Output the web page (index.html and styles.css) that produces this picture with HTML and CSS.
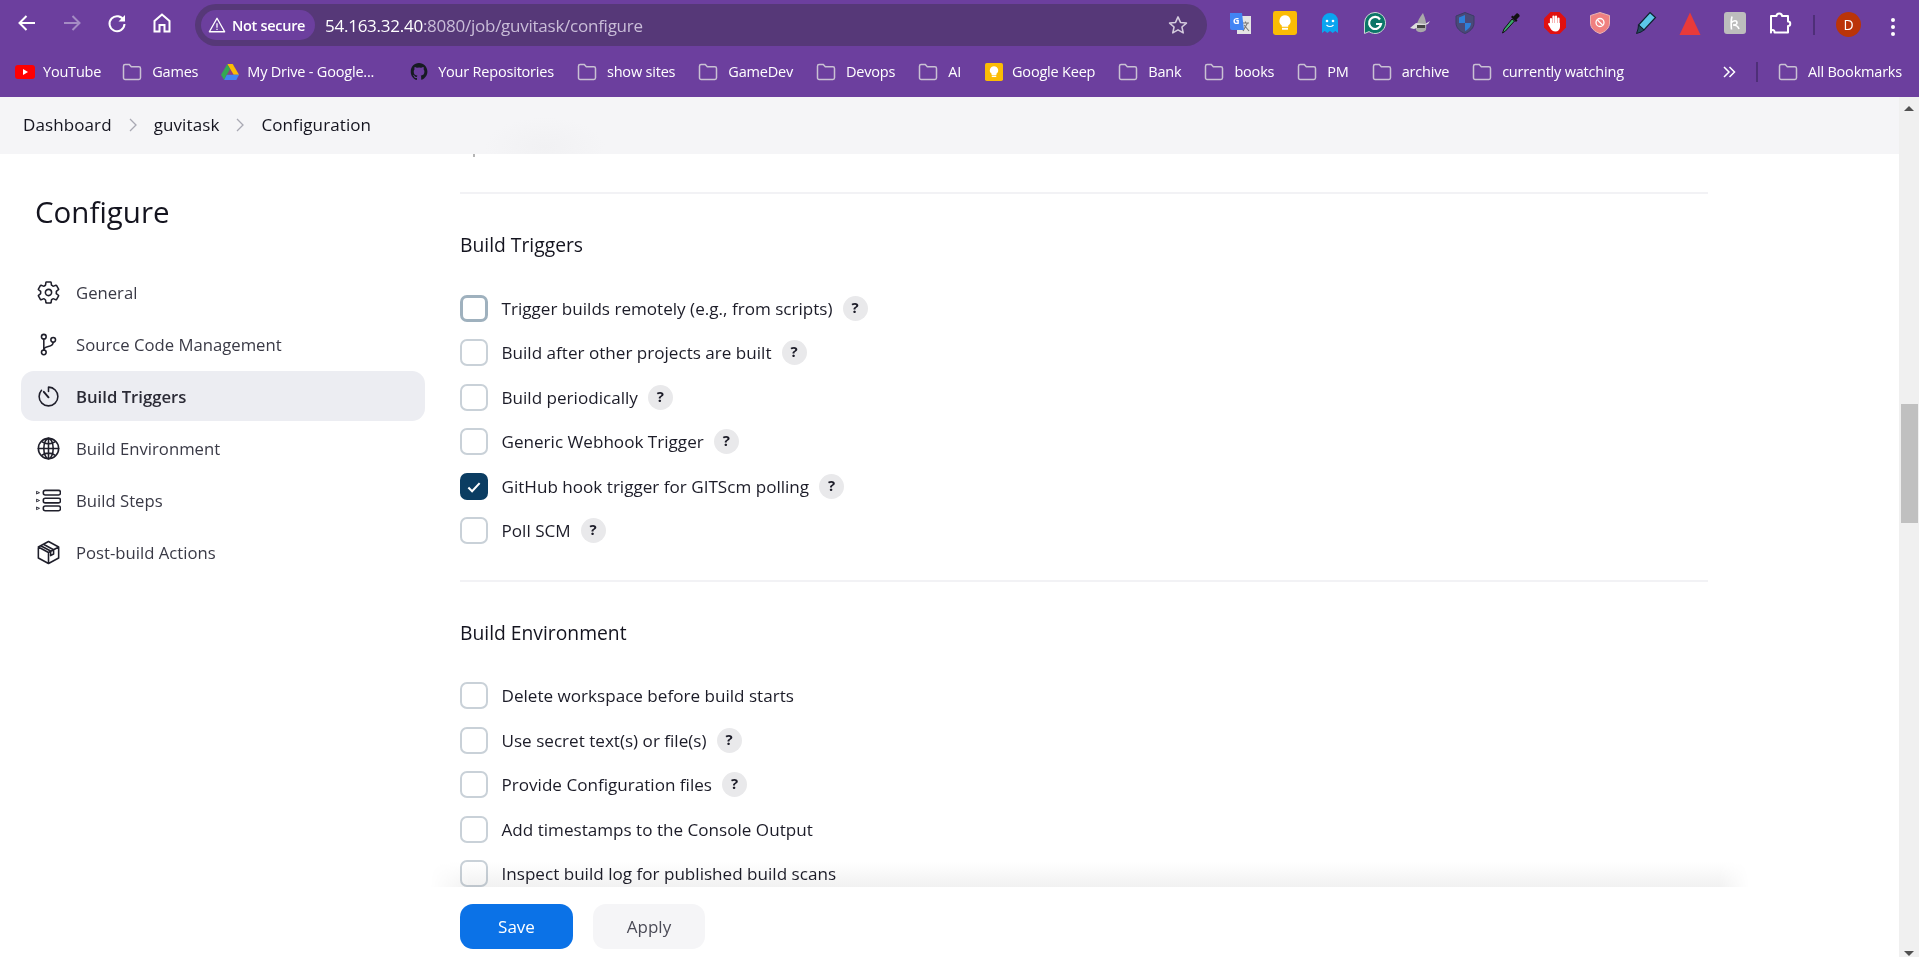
FILE: index.html
```html
<!DOCTYPE html>
<html lang="en">
<head>
    <meta charset="UTF-8">
    <meta name="viewport" content="width=device-width, initial-scale=1.0">
    <title>guvitask Config [Jenkins]</title>
    <link rel="stylesheet" href="styles.css">
</head>
<body>
    <svg class="defs" width="0" height="0">
        <symbol id="folder" viewBox="0 0 20 18">
            <path d="M1.5 3.2c0-.9.7-1.6 1.6-1.6h4.2l2 2.2h7.6c.9 0 1.6.7 1.6 1.6v9.4c0 .9-.7 1.6-1.6 1.6H3.1c-.9 0-1.6-.7-1.6-1.6z" fill="none" stroke="#c9c1d3" stroke-width="1.5"/>
        </symbol>
        <symbol id="keep" viewBox="0 0 20 20">
            <rect width="20" height="20" rx="2" fill="#fbbc04"/>
            <path d="M10 3.5a4.7 4.7 0 0 0-2.7 8.5v1.2h5.4V12A4.7 4.7 0 0 0 10 3.5z" fill="#fff"/>
            <rect x="7.5" y="14" width="5" height="1.6" fill="#fff"/>
        </symbol>
    </svg>

    <header class="chrome">
        <div class="toolbar">
            <div class="nav">
                <svg class="nav-icon" viewBox="0 0 24 24"><path d="M20 12H5M11.5 5L4.5 12l7 7" fill="none" stroke="#fff" stroke-width="2"/></svg>
                <svg class="nav-icon" viewBox="0 0 24 24"><path d="M4 12h15M12.5 5l7 7-7 7" fill="none" stroke="#a58cc4" stroke-width="2"/></svg>
                <svg class="nav-icon" viewBox="0 0 24 24"><path d="M18.800 9.500A7.500 7.500 0 1 0 19.500 13" fill="none" stroke="#fff" stroke-width="2"/><path d="M20 4v6.500h-6.500z" fill="#fff"/></svg>
                <svg class="nav-icon" viewBox="0 0 24 24"><path d="M12 3.500L4.500 10v10.500h5v-6.500h5v6.500h5V10z" fill="none" stroke="#fff" stroke-width="2"/></svg>
            </div>
            <div class="omnibox">
                <div class="not-secure">
                    <svg class="warn" viewBox="0 0 20 20"><path d="M10 2.500L1.500 17.500h17z" fill="none" stroke="#fff" stroke-width="1.500" stroke-linejoin="round"/><path d="M10 8v5M10 14.200v1.400" stroke="#fff" stroke-width="1.400"/></svg>
                    <span>Not secure</span>
                </div>
                <div class="url"><b>54.163.32.40</b>:8080/job/guvitask/configure</div>
                <svg class="star" viewBox="0 0 24 24"><path d="M12 3.200l2.700 6 6.500.7-4.900 4.300 1.400 6.400L12 17.300l-5.700 3.300 1.400-6.400-4.900-4.300 6.500-.7z" fill="none" stroke="#d4cbdd" stroke-width="1.700" stroke-linejoin="round"/></svg>
            </div>
            <div class="extensions">
                <svg class="ext" viewBox="0 0 24 24"><rect x="9" y="5" width="14" height="18" fill="#e4e4e4"/><path d="M14 12h7M17.500 10.500v1.500M15 20l4.500-8M16 14l5 6" stroke="#777" stroke-width="1.100" fill="none"/><path d="M2 2h12l2 17H4a2 2 0 0 1-2-2z" fill="#4285f4"/><text x="5" y="13" class="ext-g">G</text></svg>
                <svg class="ext" viewBox="0 0 20 20"><use href="#keep"/></svg>
                <svg class="ext" viewBox="0 0 24 24"><path d="M4 22V10a8 8 0 0 1 16 0v12l-2.700-2-2.600 2-2.700-2-2.600 2-2.700-2z" fill="#0aa5f0"/><circle cx="9" cy="10" r="1.300" fill="#fff"/><circle cx="15" cy="10" r="1.300" fill="#fff"/><path d="M8.500 14c2 2 5 2 7 0" fill="none" stroke="#fff" stroke-width="1.200"/></svg>
                <svg class="ext" viewBox="0 0 24 24"><path d="M12 1.500a10.500 10.500 0 1 1-6 19.100L1.500 22.500V12A10.500 10.500 0 0 1 12 1.500z" fill="#0b7668" stroke="#cfd8d6" stroke-width="1"/><path d="M17 8.500A6 6 0 1 0 18 13h-5" fill="none" stroke="#fff" stroke-width="2.200"/></svg>
                <svg class="ext" viewBox="0 0 24 24"><path d="M15 2c2 5 4 10 3 17-3 3-8 3-10 0 0-6 3-12 7-17z" fill="#a9a9a9"/><path d="M8 12l-6 5 4 1 14-5 2-3-5 3z" fill="#ddd"/><rect x="9" y="14" width="8" height="3" fill="#444"/></svg>
                <svg class="ext" viewBox="0 0 24 24"><path d="M12 1.500l9 3.500v7c0 5-4 8.500-9 10.500-5-2-9-5.500-9-10.500V5z" fill="#4a4a78" stroke="#3c3c66" stroke-width="1"/><path d="M12 4l-6 2.500V12h6zM12 12v8c3-1.500 6-4 6-8z" fill="#2f7fd8"/></svg>
                <svg class="ext" viewBox="0 0 24 24"><path d="M14 8l-8 10-1.500 4 3-2 9-10z" fill="#3aa86b" stroke="#111" stroke-width="1"/><path d="M13 6l5 5 1.500-1.500-1-1 3-3c1-1-2-4-3-3l-3 3-1-1z" fill="#111"/></svg>
                <svg class="ext" viewBox="0 0 24 24"><path d="M7.500 1h9L23 7.500v9L16.500 23h-9L1 16.500v-9z" fill="#e01010"/><path class="hand" d="M8 13V8M10.500 12V5.500M13 12V5.500M15.500 13V7.500"/><path d="M7 12h10v4c0 2.500-2 4.500-4.500 4.500S8 19 7 16.500l-1.800-3c-.5-1 .9-2 1.800-1z" fill="#fff"/></svg>
                <svg class="ext" viewBox="0 0 24 24"><path d="M12 1.500l9.500 3v7.500c0 5-4 8.700-9.500 10.500C6.500 20.700 2.500 17 2.500 12V4.500z" fill="#f08080" stroke="#e8b4b4" stroke-width="1"/><circle cx="12" cy="11.500" r="4" fill="none" stroke="#fff" stroke-width="1.300"/><path d="M9.500 9l5 5" stroke="#fff" stroke-width="1.300"/></svg>
                <svg class="ext" viewBox="0 0 24 24"><path d="M17 1.500l5.500 5L11 19l-5.500-5z" fill="#5cc6e8" stroke="#10202c" stroke-width="1.200"/><path d="M5.500 14l5.500 5-3 2-4.500 1.500L5 18z" fill="#24495e" stroke="#10202c" stroke-width="1"/></svg>
                <svg class="ext" viewBox="0 0 24 24"><path d="M12 1.500L22.500 24h-21z" fill="#e93a3a"/></svg>
                <svg class="ext" viewBox="0 0 24 24"><rect x="1" y="1" width="22" height="22" rx="3" fill="#bdbdbd"/><path d="M9 5.500C8 9 8 14 8.500 18.500M8 12c2.500-3 6-3 6 0 0 1-2 2-4 2 2 0 5 1 6 4" fill="none" stroke="#fff" stroke-width="1.600"/></svg>
                <svg class="ext" viewBox="0 0 24 24"><path d="M3 5h5.500c0-3.500 5.500-3.500 5.500 0H20v5.500c3 0 3 4.500 0 4.500v6.500H6.500c.5-3.500-4-3.500-3.500 0z" fill="none" stroke="#fff" stroke-width="2" stroke-linejoin="round"/></svg>
            </div>
            <div class="toolbar-sep"></div>
            <div class="avatar">D</div>
            <div class="kebab"><i></i><i></i><i></i></div>
        </div>
        <nav class="bookmarks">
            <a class="bm bm-yt"><svg class="bm-icon" viewBox="0 0 20 14"><rect width="20" height="14" rx="3" fill="#f00"/><path d="M8 4l5 3-5 3z" fill="#fff"/></svg>YouTube</a>
            <a class="bm"><svg class="bm-icon"><use href="#folder"/></svg>Games</a>
            <a class="bm bm-tight"><svg class="bm-icon drive" viewBox="0 0 20 18"><path d="M7 0h6l7 12h-6z" fill="#fbbc04"/><path d="M7 0l3 6-6.500 12L0 12z" fill="#34a853"/><path d="M6.500 12H20l-3 6H3.500z" fill="#4285f4"/><path d="M6.500 12H14l-4-6z" fill="#ea4335" opacity=".3"/></svg>My Drive - Google...</a>
            <a class="bm bm-gh"><svg class="bm-icon" viewBox="0 0 24 24"><path d="M12 0C5.400 0 1 5 1 11.500c0 5 3 9.300 7.500 11 .6.100.8-.300.8-.6v-2c-3 .6-3.700-1.400-3.700-1.400-.5-1.300-1.200-1.700-1.200-1.700-1-.7 0-.7 0-.7 1.100.1 1.700 1.200 1.700 1.200 1 1.700 2.600 1.200 3.200.9.100-.7.400-1.200.7-1.500-2.500-.3-5-1.300-5-5.500 0-1.200.4-2.200 1.100-3-.1-.3-.5-1.400.1-3 0 0 1-.3 3.100 1.100a11 11 0 0 1 5.600 0c2.100-1.400 3.100-1.100 3.100-1.100.6 1.600.2 2.700.1 3 .7.800 1.100 1.800 1.100 3 0 4.200-2.500 5.200-5 5.500.4.400.7 1 .7 2v3c0 .3.200.7.800.6 4.500-1.700 7.500-6 7.500-11C23 5 18.600 0 12 0z" fill="#161b22"/></svg>Your Repositories</a>
            <a class="bm"><svg class="bm-icon"><use href="#folder"/></svg>show sites</a>
            <a class="bm"><svg class="bm-icon"><use href="#folder"/></svg>GameDev</a>
            <a class="bm"><svg class="bm-icon"><use href="#folder"/></svg>Devops</a>
            <a class="bm"><svg class="bm-icon"><use href="#folder"/></svg>AI</a>
            <a class="bm bm-tight"><svg class="bm-icon"><use href="#keep"/></svg>Google Keep</a>
            <a class="bm"><svg class="bm-icon"><use href="#folder"/></svg>Bank</a>
            <a class="bm"><svg class="bm-icon"><use href="#folder"/></svg>books</a>
            <a class="bm"><svg class="bm-icon"><use href="#folder"/></svg>PM</a>
            <a class="bm"><svg class="bm-icon"><use href="#folder"/></svg>archive</a>
            <a class="bm"><svg class="bm-icon"><use href="#folder"/></svg>currently watching</a>
            <div class="bm-end">
                <svg class="more" viewBox="0 0 14 14"><path d="M2 2l5 5-5 5M7.500 2l5 5-5 5" fill="none" stroke="#fff" stroke-width="1.500"/></svg>
                <div class="bm-sep"></div>
                <a class="bm"><svg class="bm-icon"><use href="#folder"/></svg>All Bookmarks</a>
            </div>
        </nav>
    </header>

    <div class="window">
        <div class="viewport">
            <div class="breadcrumbs">
                <a>Dashboard</a>
                <svg class="crumb-sep" viewBox="0 0 10 16"><path d="M2 2l6 6-6 6" fill="none" stroke="#a9a9b3" stroke-width="1.300"/></svg>
                <a>guvitask</a>
                <svg class="crumb-sep" viewBox="0 0 10 16"><path d="M2 2l6 6-6 6" fill="none" stroke="#a9a9b3" stroke-width="1.300"/></svg>
                <a>Configuration</a>
            </div>

            <div class="page">
                <aside class="sidebar">
                    <h1>Configure</h1>
                    <ul class="side-nav">
                        <li><svg class="side-icon" viewBox="0 0 512 512"><path d="M262.29 192.31a64 64 0 1057.4 57.4 64.13 64.13 0 00-57.4-57.4zM416.39 256a154.34 154.34 0 01-1.53 20.79l45.21 35.46a10.81 10.81 0 012.45 13.75l-42.77 74a10.81 10.81 0 01-13.14 4.59l-44.9-18.08a16.11 16.11 0 00-15.17 1.75A164.48 164.48 0 01325 400.8a15.94 15.94 0 00-8.82 12.14l-6.73 47.89a11.08 11.08 0 01-10.68 9.17h-85.54a11.11 11.11 0 01-10.69-8.87l-6.72-47.82a16.07 16.07 0 00-9-12.22 155.3 155.3 0 01-21.46-12.57 16 16 0 00-15.11-1.71l-44.89 18.07a10.81 10.81 0 01-13.14-4.58l-42.77-74a10.8 10.8 0 012.45-13.75l38.21-30a16.05 16.05 0 006-14.08c-.36-4.17-.58-8.33-.58-12.5s.21-8.27.58-12.35a16 16 0 00-6.07-13.94l-38.19-30A10.81 10.81 0 0149.48 186l42.77-74a10.81 10.81 0 0113.14-4.59l44.9 18.08a16.11 16.11 0 0015.17-1.75A164.48 164.48 0 01187 111.2a15.94 15.94 0 008.82-12.14l6.73-47.89A11.08 11.08 0 01213.23 42h85.54a11.11 11.11 0 0110.69 8.87l6.72 47.82a16.07 16.07 0 009 12.22 155.3 155.3 0 0121.46 12.57 16 16 0 0015.11 1.71l44.89-18.07a10.81 10.81 0 0113.14 4.58l42.77 74a10.8 10.8 0 01-2.45 13.75l-38.21 30a16.05 16.05 0 00-6.05 14.08c.33 4.14.55 8.3.55 12.47z"/></svg>General</li>
                        <li><svg class="side-icon" viewBox="0 0 512 512"><circle cx="160" cy="96" r="48"/><circle cx="160" cy="416" r="48"/><path d="M160 144v224"/><circle cx="352" cy="160" r="48"/><path d="M352 208c0 128-192 48-192 160"/></svg>Source Code Management</li>
                        <li class="active"><svg class="side-icon" viewBox="0 0 512 512"><path d="M112.91 128A191.85 191.85 0 0064 254c-1.18 106.35 85.65 193.8 192 194 106.2.2 192-85.83 192-192 0-104.54-83.55-189.61-187.5-192a4.36 4.36 0 00-4.5 4.37V152"/><path class="needle" d="M160 160l96 112"/></svg>Build Triggers</li>
                        <li><svg class="side-icon" viewBox="0 0 512 512"><circle cx="256" cy="256" r="208"/><ellipse cx="256" cy="256" rx="96" ry="208"/><path d="M117.33 117.33c38.24 27.15 86.38 43.34 138.67 43.34s100.43-16.19 138.67-43.34M394.67 394.67c-38.24-27.15-86.38-43.34-138.67-43.34s-100.43 16.19-138.67 43.34M256 48v416M464 256H48"/></svg>Build Environment</li>
                        <li><svg class="side-icon" viewBox="0 0 512 512"><rect x="150" y="48" width="350" height="96" rx="40"/><rect x="150" y="208" width="350" height="96" rx="40"/><rect x="150" y="368" width="350" height="96" rx="40"/><path class="thin" d="M16 72l56 24-56 24zM16 232l56 24-56 24zM16 392l56 24-56 24z"/></svg>Build Steps</li>
                        <li><svg class="side-icon" viewBox="0 0 512 512"><path d="M256 32L48 144v224l208 112 208-112V144zM48 144l208 112 208-112M256 256v224M152 88l208 112v88l-60 32v-96L96 118"/></svg>Post-build Actions</li>
                    </ul>
                </aside>

                <main class="content">
                    <div class="cut-off"></div>
                    <section class="section">
                        <h2>Build Triggers</h2>
                        <label class="row"><span class="box focused"></span>Trigger builds remotely (e.g., from scripts)<span class="help">?</span></label>
                        <label class="row"><span class="box"></span>Build after other projects are built<span class="help">?</span></label>
                        <label class="row"><span class="box"></span>Build periodically<span class="help">?</span></label>
                        <label class="row"><span class="box"></span>Generic Webhook Trigger<span class="help">?</span></label>
                        <label class="row"><span class="box checked"><svg viewBox="0 0 16 16"><path d="M3 8.500l3.300 3.300L13 4.500" fill="none" stroke="#fff" stroke-width="1.800"/></svg></span>GitHub hook trigger for GITScm polling<span class="help">?</span></label>
                        <label class="row"><span class="box"></span>Poll SCM<span class="help">?</span></label>
                    </section>
                    <section class="section">
                        <h2>Build Environment</h2>
                        <label class="row"><span class="box"></span>Delete workspace before build starts</label>
                        <label class="row"><span class="box"></span>Use secret text(s) or file(s)<span class="help">?</span></label>
                        <label class="row"><span class="box"></span>Provide Configuration files<span class="help">?</span></label>
                        <label class="row"><span class="box"></span>Add timestamps to the Console Output</label>
                        <label class="row"><span class="box"></span>Inspect build log for published build scans</label>
                    </section>
                </main>
            </div>

            <div class="actions">
                <button class="btn primary" type="button">Save</button>
                <button class="btn" type="button">Apply</button>
            </div>
        </div>
        <div class="scrollbar">
            <span class="arrow up"></span>
            <div class="thumb"></div>
            <span class="arrow down"></span>
        </div>
    </div>
</body>
</html>
```

FILE: styles.css
```css
* {
    box-sizing: border-box;
}
html, body {
    height: 100%;
}
body {
    margin: 0;
    overflow: hidden;
    display: flex;
    flex-direction: column;
    font-family: "Open Sans", "Noto Sans", sans-serif;
    color: #14141f;
    background: #fff;
}
.defs {
    position: absolute;
}

/* browser chrome */
.chrome {
    height: 97px;
    flex: none;
    background: #6c3f9e;
    color: #fff;
}
.toolbar {
    height: 46px;
    padding-top: 4px;
    display: flex;
    align-items: stretch;
}
.nav {
    width: 195px;
    padding: 0 0 5px 15px;
    display: flex;
    align-items: center;
    gap: 21px;
    flex: none;
}
.nav-icon {
    width: 24px;
    height: 24px;
}
.omnibox {
    width: 1012px;
    height: 42px;
    flex: none;
    background: #563878;
    border-radius: 21px;
    padding: 0 18px 0 6px;
    display: flex;
    align-items: center;
}
.not-secure {
    width: 114px;
    height: 30px;
    flex: none;
    border-radius: 15px;
    background: #6c3f9e;
    display: flex;
    align-items: center;
    gap: 6px;
    padding-left: 7px;
    font-size: 14.5px;
    font-weight: 600;
    letter-spacing: -0.3px;
}
.warn {
    width: 18px;
    height: 18px;
}
.url {
    flex: 1;
    margin-left: 10px;
    font-size: 17px;
    letter-spacing: -0.25px;
    color: #c9bdd8;
}
.url b {
    font-weight: 400;
    color: #fff;
}
.star {
    width: 22px;
    height: 22px;
}
.extensions {
    width: 588px;
    padding: 0 0 5px 21px;
    display: flex;
    align-items: center;
    gap: 21px;
    flex: none;
}
.ext {
    width: 24px;
    height: 24px;
    flex: none;
}
.ext-g {
    font-size: 9px;
    font-weight: 700;
    fill: #fff;
}
.hand {
    fill: none;
    stroke: #fff;
    stroke-width: 2.2;
    stroke-linecap: round;
}
.toolbar-sep {
    width: 2px;
    height: 20px;
    margin: 11px 0 0 18px;
    background: #4e2f78;
}
.avatar {
    width: 25px;
    height: 25px;
    margin: 8px 0 0 21px;
    border-radius: 50%;
    background: #bb3408;
    font-size: 14px;
    line-height: 25px;
    text-align: center;
}
.kebab {
    margin: 14px 0 0 30px;
    display: flex;
    flex-direction: column;
    gap: 3px;
}
.kebab i {
    width: 4px;
    height: 4px;
    border-radius: 50%;
    background: #fff;
}
.bookmarks {
    height: 51px;
    padding: 0 17px 0 15px;
    display: flex;
    align-items: center;
    gap: 23px;
    font-size: 14.5px;
    letter-spacing: -0.2px;
}
.bm {
    display: flex;
    align-items: center;
    gap: 10px;
    white-space: nowrap;
}
.bm-icon {
    width: 20px;
    height: 18px;
    flex: none;
}
.bm-yt {
    gap: 8px;
    margin-right: -2px;
}
.bm-tight {
    gap: 8px;
}
.bm-gh {
    gap: 9px;
    margin-left: 12px;
}
.drive {
    width: 18px;
}
.bm-end {
    margin-left: auto;
    display: flex;
    align-items: center;
}
.more {
    width: 14px;
    height: 14px;
}
.bm-sep {
    width: 2px;
    height: 20px;
    margin: 0 20px;
    background: #4e2f78;
}

/* page */
.window {
    flex: 1;
    min-height: 0;
    display: flex;
}
.viewport {
    flex: 1;
    min-width: 0;
    display: flex;
    flex-direction: column;
    position: relative;
}
.breadcrumbs {
    height: 57px;
    flex: none;
    padding: 0 0 2px 23px;
    display: flex;
    align-items: center;
    background: #f5f5f7 radial-gradient(ellipse 60px 30px at 545px 50px, #f1f1f3, transparent);
    font-size: 17px;
    letter-spacing: 0.1px;
}
.crumb-sep {
    width: 10px;
    height: 16px;
    margin: 0 16px;
}
.page {
    flex: 1;
    min-height: 0;
    overflow: hidden;
    display: flex;
}
.sidebar {
    width: 460px;
    flex: none;
    padding: 38px 0 0 21px;
}
.sidebar h1 {
    margin: 0 0 35px 14px;
    font-size: 29.5px;
    line-height: 40px;
    font-weight: 500;
}
.side-nav {
    width: 404px;
    margin: 0;
    padding: 0;
    list-style: none;
    display: flex;
    flex-direction: column;
    gap: 2px;
}
.side-nav li {
    height: 50px;
    padding-left: 15px;
    display: flex;
    align-items: center;
    gap: 15px;
    border-radius: 13px;
    font-size: 16.7px;
    color: #3a3a46;
}
.side-nav li.active {
    background: #ecedf2;
    font-weight: 600;
    color: #2b2b36;
}
.side-icon {
    width: 25px;
    height: 25px;
    flex: none;
    fill: none;
    stroke: #1f1f2b;
    stroke-width: 32;
    stroke-linejoin: round;
    stroke-linecap: round;
}
.side-icon .needle {
    stroke-width: 40;
}
.side-icon .thin {
    stroke-width: 18;
}
.content {
    width: 1248px;
    flex: none;
}
.cut-off {
    width: 2px;
    height: 3px;
    margin: 0 0 35px 13px;
    background: #b5b5b5;
}
.section {
    border-top: 2px solid #f2f2f5;
    padding: 37px 0 26.5px;
}
.section h2 {
    margin: 0 0 27px;
    font-size: 19.3px;
    line-height: 28px;
    font-weight: 500;
}
.row {
    height: 44.5px;
    display: flex;
    align-items: center;
    font-size: 17.1px;
    color: #1c1c28;
}
.box {
    width: 28px;
    height: 27px;
    margin-right: 13.5px;
    flex: none;
    border: 2px solid #c9d1d8;
    border-radius: 7px;
    background: #fff;
}
.box.focused {
    border: 3px solid #9fb1be;
}
.box.checked {
    background: #0b3d62;
    border-color: #0b3d62;
    padding: 3px;
}
.box svg {
    display: block;
}
.help {
    width: 25px;
    height: 25px;
    margin-left: 10px;
    flex: none;
    border-radius: 50%;
    background: #e9e9eb;
    font-size: 15px;
    font-weight: 700;
    line-height: 23px;
    text-align: center;
}

/* sticky save bar */
.actions {
    position: absolute;
    left: 430px;
    right: 150px;
    bottom: 0;
    height: 70px;
    padding: 17px 0 0 30px;
    display: flex;
    align-items: flex-start;
    gap: 20px;
    background: #fff;
}
.actions::before {
    content: "";
    position: absolute;
    left: 0;
    right: 0;
    top: -25px;
    height: 25px;
    background: linear-gradient(to bottom, #fff, #f1f1f1);
    mix-blend-mode: multiply;
    -webkit-mask-image: linear-gradient(to right, transparent, #000 40px, #000 calc(100% - 30px), transparent);
    mask-image: linear-gradient(to right, transparent, #000 40px, #000 calc(100% - 30px), transparent);
}
.btn {
    width: 112px;
    height: 45px;
    border: none;
    border-radius: 13px;
    background: #f5f5f7;
    font-family: inherit;
    font-size: 17px;
    color: #4b4b57;
}
.btn.primary {
    width: 113px;
    background: #0b72e7;
    color: #fff;
}

/* scrollbar */
.scrollbar {
    width: 20px;
    flex: none;
    background: #f0f0f0;
    display: flex;
    flex-direction: column;
    align-items: center;
    position: relative;
}
.thumb {
    width: 17px;
    height: 119px;
    margin-top: 293px;
    background: #c0c0c0;
}
.arrow {
    width: 0;
    height: 0;
    border-left: 5px solid transparent;
    border-right: 5px solid transparent;
}
.arrow.up {
    margin-top: 9px;
    border-bottom: 5px solid #505050;
}
.arrow.down {
    margin-top: auto;
    margin-bottom: 1px;
    border-top: 5px solid #505050;
}
```
